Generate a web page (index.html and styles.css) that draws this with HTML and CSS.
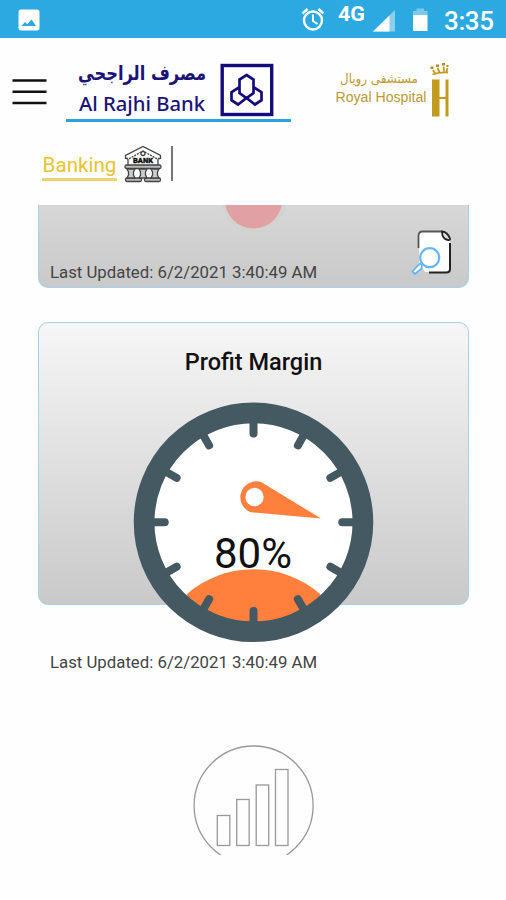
FILE: index.html
```html
<!DOCTYPE html>
<html lang="en">
<head>
  <meta charset="UTF-8">
  <title>Banking</title>
  <link rel="stylesheet" href="styles.css">
</head>
<body>

<div class="status-bar">
  <svg class="photo-icon" width="22" height="22" viewBox="0 0 22 22">
    <rect x="0.5" y="0.5" width="21" height="21" rx="2.5" fill="#fff"/>
    <path d="M3.500 17L7 13l2.300 2.200L13.500 10.500 18 17z" fill="#2ba9e0"/>
  </svg>
  <svg class="status-icons" width="206" height="38" viewBox="300 0 206 38">
    <g fill="none" stroke="#fff">
      <circle cx="313" cy="20.500" r="9" stroke-width="2.400"/>
      <path d="M313 14.500v6.500l4.500 3" stroke-width="2"/>
      <path d="M302.500 13.500l5-4.500M323.500 13.500l-5-4.500" stroke-width="2.400"/>
    </g>
    <text class="network" x="338" y="21" textLength="27" lengthAdjust="spacingAndGlyphs">4G</text>
    <path d="M373 31.500L395 10v21.500z" fill="#8bcfed"/>
    <path d="M373 31.500L389.500 15.500v16z" fill="#fff"/>
    <path d="M413 11h3.500V8.500h7.500V11h3.500v4.500H413z" fill="#7cc9ea"/>
    <path d="M413 15h14.500v16H413z" fill="#fff"/>
    <text class="clock" x="444" y="30" textLength="50">3:35</text>
  </svg>
</div>

<div class="header">
  <svg class="menu" width="35" height="30" viewBox="0 0 35 30">
    <path d="M0.500 3.500h34M0.500 14.700h34M0.500 26h34" stroke="#111" stroke-width="2.600"/>
  </svg>
  <div class="bank-logo">
    <svg width="225" height="59" viewBox="66 60 225 59">
      <text class="bank-ar" x="206" y="79.500" textLength="128" lengthAdjust="spacingAndGlyphs" direction="rtl">مصرف الراجحي</text>
      <text class="bank-en" x="79" y="111" textLength="126" lengthAdjust="spacingAndGlyphs">Al Rajhi Bank</text>
      <g fill="none" stroke="#140c7c">
        <rect x="222.200" y="65.500" width="49.500" height="49" stroke-width="3.400"/>
        <path d="M246.500 75l7 4.500v13.500l-7 5-7-5V79.500z" stroke-width="2.700"/>
        <path d="M239.500 88.500l-1.500-.5-6.500 4.200v8l6.500 4.300 8.500-6.500 8.500 6.500 6.500-4.300v-8L255 88l-1.500.5" stroke-width="2.700"/>
      </g>
    </svg>
  </div>
  <svg class="hospital-logo" width="116" height="60" viewBox="334 60 116 60">
    <text class="hospital-ar" x="418" y="83" textLength="78" lengthAdjust="spacingAndGlyphs" direction="rtl">مستشفى رويال</text>
    <text class="hospital-en" x="335.500" y="102" textLength="91" lengthAdjust="spacingAndGlyphs">Royal Hospital</text>
    <path d="M432 79.500h7.500v37H432zM445.500 79.500h3v37h-3zM439 97h7v2h-7z" fill="#c29a1c"/>
    <path d="M432.500 74.500q7-2.500 15.500-2M433 70l2 3.500M437.500 68l2 4M443.500 66.500l.5 5M447.500 68l-1 3.500" fill="none" stroke="#c29a1c" stroke-width="1.800"/>
    <path d="M430.500 66.500h3v2.500h-3zM436 64.500h3V67h-3zM442 63h3v2.500h-3zM446.500 65h2v2h-2z" fill="#b58b20"/>
  </svg>
</div>

<div class="tabs">
  <span class="tab">Banking</span>
  <svg class="bank-icon" width="38" height="38" viewBox="0 0 38 38">
    <g fill="none" stroke="#444" stroke-width="1.300">
      <path d="M1.500 14v-3.500L19 1.500l17.500 9V14"/>
      <path d="M2 13.500h3.500L19 6l13.500 7.500H36" stroke-dasharray="2 1"/>
      <circle cx="19" cy="8.500" r="2"/>
      <path d="M4 14v6M34 14v6"/>
      <rect x="1" y="20" width="36" height="3.500" rx="1.500" fill="#bbb"/>
      <rect x="1.500" y="33" width="16" height="3.500" rx="1.500" fill="#bbb"/>
      <rect x="20.500" y="33" width="16" height="3.500" rx="1.500" fill="#bbb"/>
      <path d="M3 24h8l-1.500 3v3l1.500 3H3l1.500-3v-3zM15 24h8l-1.500 3v3l1.500 3h-8l1.500-3v-3zM27 24h8l-1.500 3v3l1.500 3h-8l1.500-3v-3z" fill="#ccc"/>
    </g>
    <text class="bank-sign" x="9" y="18" textLength="20" lengthAdjust="spacingAndGlyphs">BANK</text>
  </svg>
  <div class="divider"></div>
</div>

<div class="content">
  <div class="card card-previous">
    <svg class="red-dot" width="64" height="29" viewBox="0 0 64 29">
      <circle cx="32" cy="-5" r="32" fill="#d2d3ce"/>
      <circle cx="31.500" cy="-5" r="28.500" fill="#e1a0a3"/>
    </svg>
    <div class="card-footer">
      <div class="updated">Last Updated: 6/2/2021 3:40:49 AM</div>
      <svg class="details-icon" width="42" height="46" viewBox="0 0 42 46">
        <path d="M8 4q0-2 3-2h21l7 8v29q0 3-2.500 3H14L8 32z" fill="#fff"/>
        <path d="M7.500 18V6q0-4.500 4-4.500H31" fill="none" stroke="#555" stroke-width="1.800"/>
        <path d="M18 42.500h17q4 0 4-3.500V13" fill="none" stroke="#222" stroke-width="2"/>
        <path d="M31 1.500q5 0 8 7 .5 2-2 1.500-6-1-6-8.500z" fill="#ddd" stroke="#222" stroke-width="1.800"/>
        <path d="M11 33l-3.500 2-6 6.500 2.500 2.500 6.500-5.500z" fill="#fff" stroke="#65b5f7" stroke-width="1.800"/>
        <circle cx="18.700" cy="27.700" r="9.500" fill="#fff" stroke="#65b5f7" stroke-width="2.200"/>
      </svg>
    </div>
  </div>

  <div class="card card-margin">
    <h2>Profit Margin</h2>
    <svg class="gauge" width="241" height="241" viewBox="0 0 241 241">
      <circle cx="120.500" cy="120.300" r="109.500" fill="#fff"/>
      <path d="M53.700 192.300A101.500 101.500 0 0 1 187.300 192.300L180 210 120.500 225 60 210z" fill="#ff7f3c"/>
      <g fill="none" stroke="#445961">
        <circle cx="120.500" cy="120.300" r="109.400" stroke-width="20.700"/>
        <g stroke-width="8" stroke-linecap="round">
          <path id="tick" d="M120.500 31.500v-11"/>
          <use href="#tick" transform="rotate(30 120.500 120.300)"/>
          <use href="#tick" transform="rotate(60 120.500 120.300)"/>
          <use href="#tick" transform="rotate(90 120.500 120.300)"/>
          <use href="#tick" transform="rotate(120 120.500 120.300)"/>
          <use href="#tick" transform="rotate(150 120.500 120.300)"/>
          <use href="#tick" transform="rotate(180 120.500 120.300)"/>
          <use href="#tick" transform="rotate(210 120.500 120.300)"/>
          <use href="#tick" transform="rotate(240 120.500 120.300)"/>
          <use href="#tick" transform="rotate(270 120.500 120.300)"/>
          <use href="#tick" transform="rotate(300 120.500 120.300)"/>
          <use href="#tick" transform="rotate(330 120.500 120.300)"/>
        </g>
      </g>
      <path d="M128.500 80.300L188 116.500 118 110.300A15.800 15.800 0 1 1 128.500 80.300z" fill="#ff7f3c"/>
      <circle cx="121.500" cy="95" r="9.200" fill="#fff"/>
      <text class="gauge-value" x="81" y="166" textLength="78">80%</text>
    </svg>
    <div class="updated">Last Updated: 6/2/2021 3:40:49 AM</div>
  </div>

  <svg class="chart-icon" width="122" height="110" viewBox="193 745 122 110">
    <g fill="none" stroke="#999" stroke-width="1.300">
      <circle cx="253.600" cy="805.500" r="59.500"/>
      <rect x="217.300" y="815.500" width="12.500" height="30"/>
      <rect x="236.700" y="799.500" width="12.500" height="46"/>
      <rect x="256.200" y="785" width="12.500" height="60.500"/>
      <rect x="275.500" y="769.500" width="12.500" height="76"/>
    </g>
  </svg>
</div>

</body>
</html>
```
FILE: styles.css
```css
* {
  box-sizing: border-box;
}
body {
  margin: 0;
  height: 900px;
  overflow: hidden;
  background: #fefefe;
  font-family: Roboto, sans-serif;
}
svg {
  display: block;
  flex-shrink: 0;
}
.status-bar {
  display: flex;
  justify-content: space-between;
  height: 38px;
  background: #2ba9e0;
}
.photo-icon {
  margin: 9px 0 0 18px;
}
.network {
  font-size: 20px;
  font-weight: 700;
  fill: #fff;
}
.clock {
  font-size: 26px;
  font-weight: 500;
  fill: #fff;
}
.header {
  display: flex;
  align-items: flex-start;
  height: 102px;
  padding: 22px 0 0 12px;
}
.menu {
  margin: 17px 19px 0 0;
}
.bank-logo {
  border-bottom: 3px solid #2ba3da;
}
.hospital-logo {
  margin-left: 43px;
}
.bank-ar, .bank-en {
  fill: #1b1375;
}
.bank-ar {
  font-family: "DejaVu Sans", sans-serif;
  font-size: 20px;
  font-weight: 700;
}
.bank-en {
  font-family: "Noto Sans", sans-serif;
  font-size: 20px;
  font-weight: 500;
}
.hospital-ar, .hospital-en {
  fill: #b99a35;
}
.hospital-ar {
  font-family: "DejaVu Sans", sans-serif;
  font-size: 13px;
}
.hospital-en {
  font-family: "Liberation Sans", sans-serif;
  font-size: 14px;
}
.tabs {
  display: flex;
  align-items: flex-start;
  height: 65px;
  padding: 5px 0 0 42px;
}
.tab {
  width: 75px;
  height: 36px;
  padding-top: 8px;
  border-bottom: 3px solid #ecd271;
  color: #e8c32f;
  font-size: 20.6px;
  line-height: 25px;
  text-align: center;
  white-space: nowrap;
}
.bank-icon {
  margin-left: 7px;
}
.bank-sign {
  font-size: 6.5px;
  font-weight: 900;
  fill: #111;
  stroke: #111;
  stroke-width: 0.3px;
}
.divider {
  width: 2px;
  height: 35px;
  margin: 1px 0 0 9px;
  background: #777;
}
.content {
  height: 650px;
  padding: 0 37px 0 38px;
  overflow: hidden;
}
.card {
  border: 1px solid #a5d0e5;
  border-radius: 10px;
}
.card-previous {
  display: flex;
  flex-direction: column;
  align-items: center;
  height: 83px;
  border-top: none;
  border-radius: 0 0 10px 10px;
  background: linear-gradient(#d7d7d7, #c9c9c9);
}
.card-footer {
  display: flex;
  justify-content: space-between;
  align-self: stretch;
  height: 54px;
  padding: 0 15px 0 11px;
}
.card-footer .updated {
  margin-top: 28px;
}
.details-icon {
  margin-top: -4px;
}
.updated {
  color: #444;
  font-size: 16.8px;
  line-height: 20px;
  white-space: nowrap;
}
/* the gauge hangs over the lower edge of the card */
.card-margin {
  height: 283px;
  margin-top: 34px;
  background: linear-gradient(#f6f6f6, #c9c9c9);
}
.card-margin h2 {
  margin: 25px 0 25px;
  font-size: 23.5px;
  font-weight: 500;
  line-height: 29px;
  text-align: center;
  color: #111;
}
.gauge {
  margin: 0 auto;
}
.gauge-value {
  font-size: 42px;
  fill: #111;
}
.card-margin .updated {
  margin: 9px 0 0 11px;
}
.chart-icon {
  margin: 140px auto 0;
}
```
